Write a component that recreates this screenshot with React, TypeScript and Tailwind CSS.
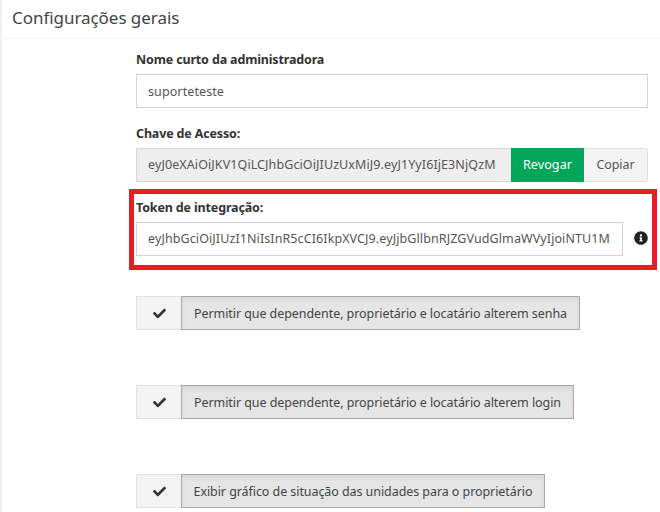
import { FaCheck, FaInfoCircle } from "react-icons/fa";

const font = { fontFamily: '"Noto Sans", sans-serif' };

const options = [
  { label: "Permitir que dependente, proprietário e locatário alterem senha", width: "w-[399px]" },
  { label: "Permitir que dependente, proprietário e locatário alterem login", width: "w-[393px]" },
  { label: "Exibir gráfico de situação das unidades para o proprietário", width: "w-[364px]" },
];

function Toggle({ label, width }: { label: string; width: string }) {
  return (
    <div className="mb-[55px] flex h-[34px]">
      <div className="flex w-[45px] items-center justify-center border border-r-0 border-[#e1e1e1] bg-[#f3f3f3]">
        <FaCheck className="h-[13px] w-[15px] text-[#333]" />
      </div>
      <div
        className={`flex items-center justify-center border border-[#a9a9a9] bg-[#e5e5e5] pt-[2px] text-[12.5px] tracking-[-0.07px] whitespace-nowrap text-[#444] shadow-[inset_0_3px_5px_rgba(0,0,0,0.06)] ${width}`}
      >
        {label}
      </div>
    </div>
  );
}

export default function App() {
  return (
    <div className="h-[512px] w-[660px] overflow-hidden bg-[#eef1f5] pl-[2px]" style={font}>
      <div className="h-full bg-white">
        <div className="h-[39px] border-b border-[#f2f2f2] pl-[10px] pt-[5px] text-[17px] tracking-[-0.05px] text-[#444]">
          Configurações gerais
        </div>
        <div className="pl-[134px] pr-[12px] pt-[11px]">
          <label className="mb-[4px] block text-[12.5px] leading-[20px] font-bold tracking-[-0.15px] text-[#333]">
            Nome curto da administradora
          </label>
          <div className="flex h-[34px] items-center border border-[#d3d3e0] bg-white px-[11px] pt-[2px] text-[12.5px] tracking-[0.1px] text-[#555]">
            suporteteste
          </div>

          <label className="mt-[16px] mb-[4px] block text-[12.5px] leading-[20px] font-bold tracking-[-0.15px] text-[#333]">
            Chave de Acesso:
          </label>
          <div className="flex h-[34px]">
            <div className="flex min-w-0 flex-1 items-center border border-r-0 border-[#d5d8dc] bg-[#eeeeee] px-[11px] pt-[1px] text-[12.5px] tracking-[0.1px] whitespace-nowrap text-[#555]">
              eyJ0eXAiOiJKV1QiLCJhbGciOiJIUzUxMiJ9.eyJ1YyI6IjE3NjQzM
            </div>
            <div className="flex w-[73px] items-center justify-center bg-[#02a65a] pt-[1px] text-[12.5px] tracking-[0.1px] text-white">Revogar</div>
            <div className="flex w-[64px] items-center justify-center rounded-r-[3px] border border-l-0 border-[#e0e0e0] bg-[#f3f3f3] pt-[1px] text-[12.5px] tracking-[-0.1px] text-[#555]">
              Copiar
            </div>
          </div>

          <div className="relative mt-[7px] h-[81px]">
            <div className="pointer-events-none absolute top-0 -right-[9px] -left-[7px] h-[81px] border-[5px] border-[#ed1c24]" />
            <label className="block pt-[9px] text-[12.5px] leading-[20px] font-bold tracking-[-0.15px] text-[#333]">
              Token de integração:
            </label>
            <div className="mt-[4px] flex items-center">
              <div className="flex h-[34px] w-[488px] items-center border border-[#d3d3e0] bg-white px-[11px] pt-[1px] text-[12.5px] tracking-[0.1px] whitespace-nowrap text-[#555]">
                eyJhbGciOiJIUzI1NiIsInR5cCI6IkpXVCJ9.eyJjbGllbnRJZGVudGlmaWVyIjoiNTU1M
              </div>
              <FaInfoCircle className="mb-[2px] ml-[11px] h-[14px] w-[14px] text-[#222]" />
            </div>
          </div>

          <div className="mt-[26px]">
            {options.map((o) => (
              <Toggle key={o.label} label={o.label} width={o.width} />
            ))}
          </div>
        </div>
      </div>
    </div>
  );
}
